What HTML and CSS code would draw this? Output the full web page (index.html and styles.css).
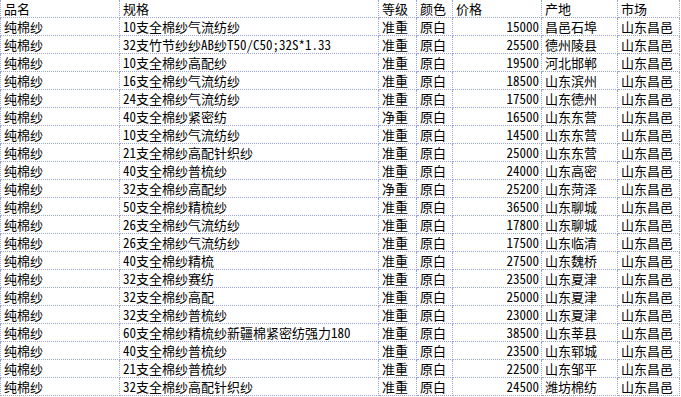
FILE: index.html
```html
<!DOCTYPE html>
<html lang="zh-CN">
<head>
<meta charset="utf-8">
<title>纯棉纱报价</title>
<link rel="stylesheet" href="styles.css">
</head>
<body>
<table class="sheet">
  <colgroup>
    <col class="c-name"><col class="c-spec"><col class="c-grade"><col class="c-color"><col class="c-price"><col class="c-origin"><col class="c-market">
  </colgroup>
  <thead>
    <tr><th>品名</th><th>规格</th><th>等级</th><th>颜色</th><th>价格</th><th>产地</th><th>市场</th></tr>
  </thead>
  <tbody>
    <tr><td>纯棉纱</td><td>10支全棉纱气流纺纱</td><td>准重</td><td>原白</td><td class="num">15000</td><td>昌邑石埠</td><td>山东昌邑</td></tr>
    <tr><td>纯棉纱</td><td>32支竹节纱纱AB纱T50/C50;32S*1.33</td><td>准重</td><td>原白</td><td class="num">25500</td><td>德州陵县</td><td>山东昌邑</td></tr>
    <tr><td>纯棉纱</td><td>10支全棉纱高配纱</td><td>准重</td><td>原白</td><td class="num">19500</td><td>河北邯郸</td><td>山东昌邑</td></tr>
    <tr><td>纯棉纱</td><td>16支全棉纱气流纺纱</td><td>准重</td><td>原白</td><td class="num">18500</td><td>山东滨州</td><td>山东昌邑</td></tr>
    <tr><td>纯棉纱</td><td>24支全棉纱气流纺纱</td><td>准重</td><td>原白</td><td class="num">17500</td><td>山东德州</td><td>山东昌邑</td></tr>
    <tr><td>纯棉纱</td><td>40支全棉纱紧密纺</td><td>净重</td><td>原白</td><td class="num">16500</td><td>山东东营</td><td>山东昌邑</td></tr>
    <tr><td>纯棉纱</td><td>10支全棉纱气流纺纱</td><td>准重</td><td>原白</td><td class="num">14500</td><td>山东东营</td><td>山东昌邑</td></tr>
    <tr><td>纯棉纱</td><td>21支全棉纱高配针织纱</td><td>准重</td><td>原白</td><td class="num">25000</td><td>山东东营</td><td>山东昌邑</td></tr>
    <tr><td>纯棉纱</td><td>40支全棉纱普梳纱</td><td>准重</td><td>原白</td><td class="num">24000</td><td>山东高密</td><td>山东昌邑</td></tr>
    <tr><td>纯棉纱</td><td>32支全棉纱高配纱</td><td>净重</td><td>原白</td><td class="num">25200</td><td>山东菏泽</td><td>山东昌邑</td></tr>
    <tr><td>纯棉纱</td><td>50支全棉纱精梳纱</td><td>准重</td><td>原白</td><td class="num">36500</td><td>山东聊城</td><td>山东昌邑</td></tr>
    <tr><td>纯棉纱</td><td>26支全棉纱气流纺纱</td><td>准重</td><td>原白</td><td class="num">17800</td><td>山东聊城</td><td>山东昌邑</td></tr>
    <tr><td>纯棉纱</td><td>26支全棉纱气流纺纱</td><td>准重</td><td>原白</td><td class="num">17500</td><td>山东临清</td><td>山东昌邑</td></tr>
    <tr><td>纯棉纱</td><td>40支全棉纱精梳</td><td>准重</td><td>原白</td><td class="num">27500</td><td>山东魏桥</td><td>山东昌邑</td></tr>
    <tr><td>纯棉纱</td><td>32支全棉纱赛纺</td><td>准重</td><td>原白</td><td class="num">23500</td><td>山东夏津</td><td>山东昌邑</td></tr>
    <tr><td>纯棉纱</td><td>32支全棉纱高配</td><td>准重</td><td>原白</td><td class="num">25000</td><td>山东夏津</td><td>山东昌邑</td></tr>
    <tr><td>纯棉纱</td><td>32支全棉纱普梳纱</td><td>准重</td><td>原白</td><td class="num">23000</td><td>山东夏津</td><td>山东昌邑</td></tr>
    <tr><td>纯棉纱</td><td>60支全棉纱精梳纱新疆棉紧密纺强力180</td><td>准重</td><td>原白</td><td class="num">38500</td><td>山东莘县</td><td>山东昌邑</td></tr>
    <tr><td>纯棉纱</td><td>40支全棉纱普梳纱</td><td>准重</td><td>原白</td><td class="num">23500</td><td>山东郓城</td><td>山东昌邑</td></tr>
    <tr><td>纯棉纱</td><td>21支全棉纱普梳纱</td><td>准重</td><td>原白</td><td class="num">22500</td><td>山东邹平</td><td>山东昌邑</td></tr>
    <tr><td>纯棉纱</td><td>32支全棉纱高配针织纱</td><td>准重</td><td>原白</td><td class="num">24500</td><td>潍坊棉纺</td><td>山东昌邑</td></tr>
  </tbody>
</table>
</body>
</html>
```

FILE: styles.css
```css
html, body {
  margin: 0;
  padding: 0;
  background: #ffffff;
}

.sheet {
  border-collapse: collapse;
  table-layout: fixed;
  width: 680px;
  font-family: "Noto Sans Mono CJK SC", "Noto Sans CJK SC", monospace;
  font-size: 13px;
  color: #000000;
}

.c-name { width: 119px; }
.c-spec { width: 259px; }
.c-grade { width: 38px; }
.c-color { width: 36px; }
.c-price { width: 89px; }
.c-origin { width: 76px; }
.c-market { width: 62px; }

.sheet th,
.sheet td {
  height: 17px;
  padding: 0 2px 0 3px;
  line-height: 17px;
  border: 1px dotted #9aa4d6;
  text-align: left;
  font-weight: normal;
  white-space: nowrap;
  overflow: hidden;
  vertical-align: middle;
}

.sheet th {
  border-top: none;
}

.sheet td.num {
  text-align: right;
}
```
